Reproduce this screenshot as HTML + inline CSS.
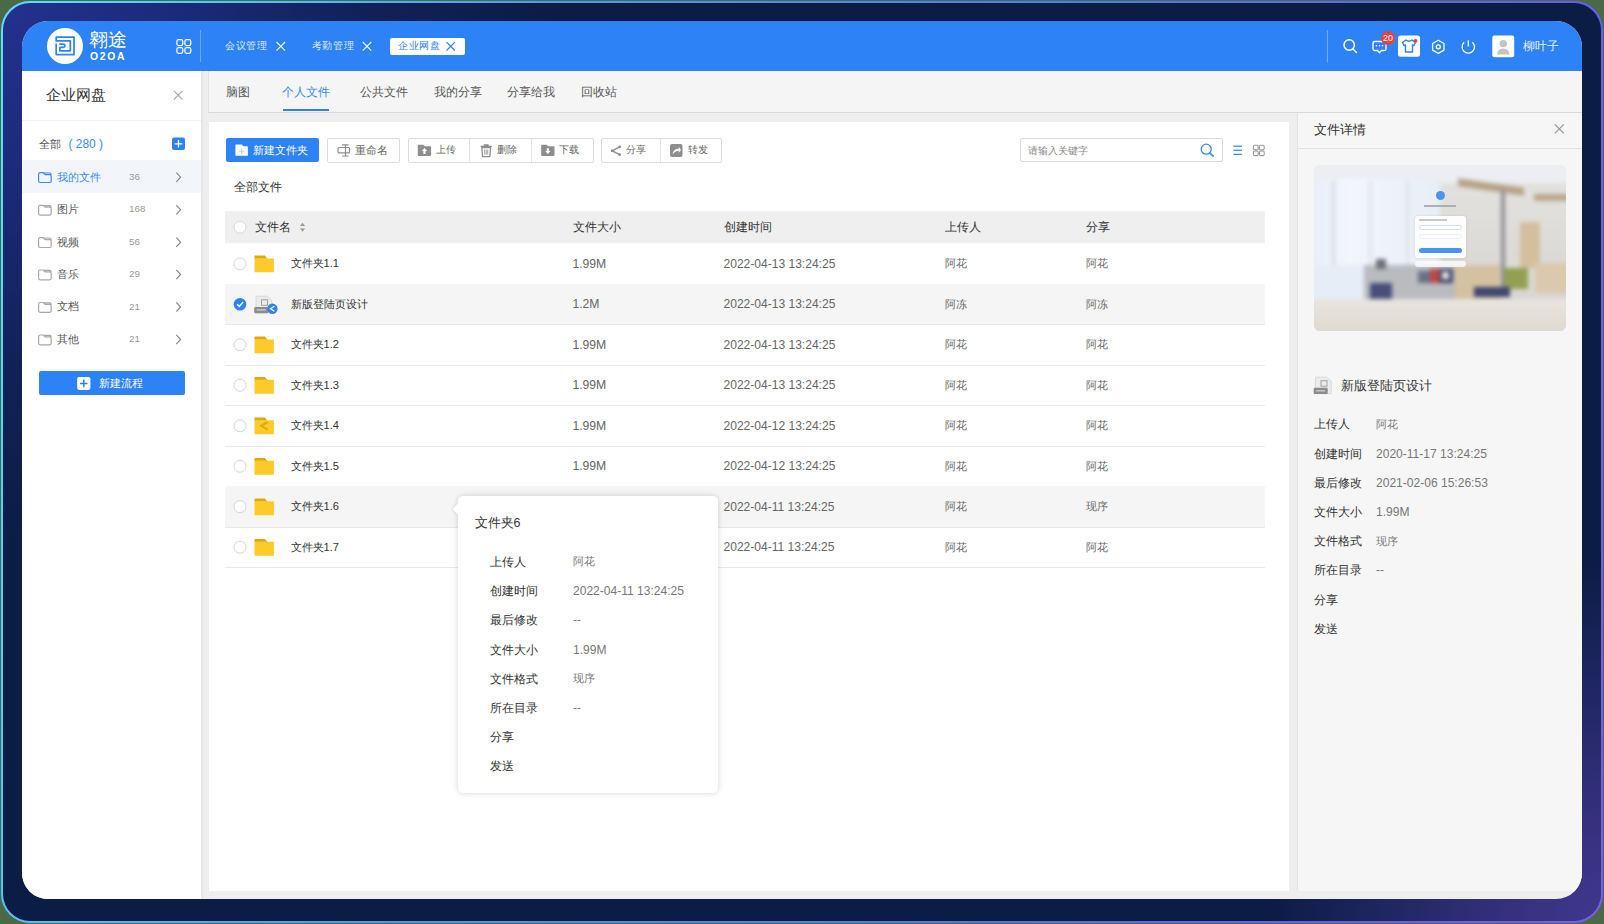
<!DOCTYPE html><html><head><meta charset="utf-8"><style>
*{box-sizing:border-box;margin:0;padding:0}
html,body{width:1604px;height:924px;overflow:hidden;background:#4a6a47;font-family:"Liberation Sans",sans-serif;color:#333}
.abs{position:absolute}
#frame{position:absolute;left:1px;top:1px;width:1602px;height:922px;border-radius:29px;
 background:linear-gradient(105deg,#5ee0ff 0%,#4f9af2 30%,#4f7ce6 60%,#6a5cf0 85%,#7a5cf4 100%)}
#frame2{position:absolute;left:2px;top:2px;right:2px;bottom:2px;border-radius:27px;overflow:hidden;
 background:radial-gradient(ellipse 560px 560px at 0 0,#23318f 0%,rgba(35,49,143,.7) 30%,rgba(35,49,143,.25) 65%,rgba(11,28,69,0) 100%),
 radial-gradient(ellipse 330px 360px at 100% 100%,#41378f 0%,rgba(65,55,143,.7) 35%,rgba(11,28,69,0) 100%),#0b1c45}
#glow1{position:absolute;left:-500px;top:-500px;width:1300px;height:1100px;border-radius:50%;
 background:radial-gradient(closest-side,#22308f 40%,rgba(34,48,143,0) 100%)}
#glow2{position:absolute;left:1200px;top:500px;width:800px;height:800px;border-radius:50%;
 background:radial-gradient(closest-side,#3f3592 30%,rgba(63,53,146,0) 100%)}
#app{position:absolute;left:22px;top:21px;width:1560px;height:878px;border-radius:26px;overflow:hidden;background:#eeeeee}
#hdr{position:absolute;left:0;top:0;width:1560px;height:50px;background:#2d82f6}
.t{position:absolute;white-space:nowrap}
svg.ov{position:absolute;left:0;top:0;width:1604px;height:924px;overflow:visible}
</style></head><body>
<div id="frame"><div id="frame2"></div></div>
<div id="app"><div id="hdr"></div>
<div class="abs" style="left:0;top:50px;width:179px;height:828px;background:#fff"></div>
<div class="abs" style="left:179px;top:50px;width:3px;height:828px;background:linear-gradient(90deg,#e2e2e2,#eeeeee)"></div>
<div class="abs" style="left:186px;top:50px;width:1374px;height:42px;background:#f5f5f5;border-left:1px solid #e2e2e2;border-bottom:1px solid #d9d9d9"></div>
<div class="abs" style="left:187px;top:101px;width:1080px;height:769px;background:#fff"></div>
<div class="abs" style="left:1275px;top:92px;width:285px;height:778px;background:#f6f6f6;border-left:1px solid #e2e2e2"></div>
</div>
<div class="abs" style="left:46.5px;top:27.7px;width:36.6px;height:36.6px;border-radius:50%;background:#fff"></div>
<div class="t" style="left:89.3px;top:31.30px;font-size:18.6px;height:18.6px;line-height:18.6px;color:#ffffff;font-weight:normal;">翱途</div>
<div class="t" style="left:90px;top:51.70px;font-size:10.4px;height:10.4px;line-height:10.4px;color:#ffffff;font-weight:bold;letter-spacing:1.7px">O2OA</div>
<div class="t" style="left:225.2px;top:40.77px;font-size:10.45px;height:10.45px;line-height:10.45px;color:rgba(255,255,255,.85);font-weight:normal;letter-spacing:0.6px">会议管理</div>
<div class="t" style="left:311.8px;top:40.77px;font-size:10.45px;height:10.45px;line-height:10.45px;color:rgba(255,255,255,.85);font-weight:normal;letter-spacing:0.6px">考勤管理</div>
<div class="abs" style="left:389.8px;top:37.6px;width:75.4px;height:17.3px;border-radius:2px;background:#fff"></div>
<div class="t" style="left:398.2px;top:40.77px;font-size:10.45px;height:10.45px;line-height:10.45px;color:#2d82f6;font-weight:normal;letter-spacing:0.6px">企业网盘</div>
<div class="t" style="left:1523.3px;top:41.30px;font-size:11.8px;height:11.8px;line-height:11.8px;color:rgba(255,255,255,.9);font-weight:normal;">柳叶子</div>
<div class="t" style="left:46.3px;top:88.10px;font-size:14.6px;height:14.6px;line-height:14.6px;color:#333;font-weight:500;">企业网盘</div>
<div class="abs" style="left:22px;top:119.5px;width:179px;height:1px;background:#eef0f4"></div>
<div class="t" style="left:38.5px;top:139.10px;font-size:11.4px;height:11.4px;line-height:11.4px;color:#555;font-weight:normal;">全部</div>
<div class="t" style="left:68.5px;top:138.85px;font-size:11.9px;height:11.9px;line-height:11.9px;color:#3a8af2;font-weight:normal;">( 280 )</div>
<div class="abs" style="left:22px;top:160.2px;width:179px;height:32.4px;background:#f2f6fb"></div>
<div class="t" style="left:56.5px;top:171.50px;font-size:11.4px;height:11.4px;line-height:11.4px;color:#3a8af2;font-weight:normal;">我的文件</div>
<div class="t" style="left:129.1px;top:171.80px;font-size:9.8px;height:9.8px;line-height:9.8px;color:#999;font-weight:normal;">36</div>
<div class="t" style="left:56.5px;top:204.10px;font-size:11.4px;height:11.4px;line-height:11.4px;color:#555;font-weight:normal;">图片</div>
<div class="t" style="left:129.1px;top:204.40px;font-size:9.8px;height:9.8px;line-height:9.8px;color:#999;font-weight:normal;">168</div>
<div class="t" style="left:56.5px;top:236.50px;font-size:11.4px;height:11.4px;line-height:11.4px;color:#555;font-weight:normal;">视频</div>
<div class="t" style="left:129.1px;top:236.80px;font-size:9.8px;height:9.8px;line-height:9.8px;color:#999;font-weight:normal;">56</div>
<div class="t" style="left:56.5px;top:268.80px;font-size:11.4px;height:11.4px;line-height:11.4px;color:#555;font-weight:normal;">音乐</div>
<div class="t" style="left:129.1px;top:269.10px;font-size:9.8px;height:9.8px;line-height:9.8px;color:#999;font-weight:normal;">29</div>
<div class="t" style="left:56.5px;top:301.30px;font-size:11.4px;height:11.4px;line-height:11.4px;color:#555;font-weight:normal;">文档</div>
<div class="t" style="left:129.1px;top:301.60px;font-size:9.8px;height:9.8px;line-height:9.8px;color:#999;font-weight:normal;">21</div>
<div class="t" style="left:56.5px;top:333.80px;font-size:11.4px;height:11.4px;line-height:11.4px;color:#555;font-weight:normal;">其他</div>
<div class="t" style="left:129.1px;top:334.10px;font-size:9.8px;height:9.8px;line-height:9.8px;color:#999;font-weight:normal;">21</div>
<div class="abs" style="left:38.5px;top:371.1px;width:146.5px;height:24.4px;border-radius:2px;background:#2d82f6"></div>
<div class="t" style="left:98.9px;top:377.80px;font-size:11.4px;height:11.4px;line-height:11.4px;color:#fff;font-weight:normal;">新建流程</div>
<div class="t" style="left:225.5px;top:85.55px;font-size:12.1px;height:12.1px;line-height:12.1px;color:#555;font-weight:normal;">脑图</div>
<div class="t" style="left:282.4px;top:85.55px;font-size:12.1px;height:12.1px;line-height:12.1px;color:#3a8af2;font-weight:normal;">个人文件</div>
<div class="t" style="left:359.7px;top:85.55px;font-size:12.1px;height:12.1px;line-height:12.1px;color:#555;font-weight:normal;">公共文件</div>
<div class="t" style="left:433.7px;top:85.55px;font-size:12.1px;height:12.1px;line-height:12.1px;color:#555;font-weight:normal;">我的分享</div>
<div class="t" style="left:507.3px;top:85.55px;font-size:12.1px;height:12.1px;line-height:12.1px;color:#555;font-weight:normal;">分享给我</div>
<div class="t" style="left:581.3px;top:85.55px;font-size:12.1px;height:12.1px;line-height:12.1px;color:#555;font-weight:normal;">回收站</div>
<div class="abs" style="left:282.8px;top:108.9px;width:45.8px;height:2.6px;background:#2d82f6"></div>
<div class="abs" style="left:225.9px;top:138.1px;width:93.4px;height:24.4px;border-radius:2px;background:#2d82f6"></div>
<div class="t" style="left:252.8px;top:145.30px;font-size:10.6px;height:10.6px;line-height:10.6px;color:#fff;font-weight:normal;">新建文件夹</div>
<div class="abs" style="left:327.4px;top:138.1px;width:72.70000000000005px;height:24.5px;border-radius:2px;border:1px solid #dcdcdc;background:#fff"></div>
<div class="t" style="left:355.2px;top:145.35px;font-size:10.5px;height:10.5px;line-height:10.5px;color:#666;font-weight:normal;">重命名</div>
<div class="abs" style="left:408px;top:138.1px;width:185.79999999999995px;height:24.5px;border-radius:2px;border:1px solid #dcdcdc;background:#fff"></div>
<div class="abs" style="left:469px;top:138.6px;width:1px;height:23.5px;background:#e2e2e2"></div>
<div class="abs" style="left:531px;top:138.6px;width:1px;height:23.5px;background:#e2e2e2"></div>
<div class="t" style="left:436px;top:145.40px;font-size:10.4px;height:10.4px;line-height:10.4px;color:#666;font-weight:normal;">上传</div>
<div class="t" style="left:497.4px;top:145.40px;font-size:10.4px;height:10.4px;line-height:10.4px;color:#666;font-weight:normal;">删除</div>
<div class="t" style="left:559.4px;top:145.40px;font-size:10.4px;height:10.4px;line-height:10.4px;color:#666;font-weight:normal;">下载</div>
<div class="abs" style="left:601.3px;top:138.1px;width:120.40000000000009px;height:24.5px;border-radius:2px;border:1px solid #dcdcdc;background:#fff"></div>
<div class="abs" style="left:659.5px;top:138.7px;width:1px;height:23.5px;background:#e2e2e2"></div>
<div class="t" style="left:626.1px;top:145.40px;font-size:10.4px;height:10.4px;line-height:10.4px;color:#666;font-weight:normal;">分享</div>
<div class="t" style="left:687.6px;top:145.40px;font-size:10.4px;height:10.4px;line-height:10.4px;color:#666;font-weight:normal;">转发</div>
<div class="abs" style="left:1020px;top:138.2px;width:202.6px;height:24.3px;border-radius:2px;border:1px solid #d9d9d9;background:#fff"></div>
<div class="t" style="left:1028.2px;top:145.50px;font-size:9.8px;height:9.8px;line-height:9.8px;color:#888;font-weight:normal;">请输入关键字</div>
<div class="t" style="left:233.5px;top:181.35px;font-size:12.1px;height:12.1px;line-height:12.1px;color:#333;font-weight:normal;">全部文件</div>
<div class="abs" style="left:225px;top:211px;width:1040px;height:32.4px;background:#efefef"></div>
<div class="t" style="left:254.8px;top:221.40px;font-size:12px;height:12px;line-height:12px;color:#333;font-weight:500;">文件名</div>
<div class="t" style="left:572.5px;top:221.40px;font-size:12px;height:12px;line-height:12px;color:#333;font-weight:500;">文件大小</div>
<div class="t" style="left:723.5px;top:221.40px;font-size:12px;height:12px;line-height:12px;color:#333;font-weight:500;">创建时间</div>
<div class="t" style="left:944.8px;top:221.40px;font-size:12px;height:12px;line-height:12px;color:#333;font-weight:500;">上传人</div>
<div class="t" style="left:1086px;top:221.40px;font-size:12px;height:12px;line-height:12px;color:#333;font-weight:500;">分享</div>
<div class="abs" style="left:225px;top:283.80px;width:1040px;height:1px;background:#e8e8e8"></div>
<div class="t" style="left:290.6px;top:258.25px;font-size:11.1px;height:11.1px;line-height:11.1px;color:#333;font-weight:normal;">文件夹1.1</div>
<div class="t" style="left:572.4px;top:257.70px;font-size:12.2px;height:12.2px;line-height:12.2px;color:#666;font-weight:normal;">1.99M</div>
<div class="t" style="left:723.5px;top:257.78px;font-size:12.05px;height:12.05px;line-height:12.05px;color:#666;font-weight:normal;">2022-04-13 13:24:25</div>
<div class="t" style="left:944.8px;top:258.20px;font-size:11.2px;height:11.2px;line-height:11.2px;color:#666;font-weight:normal;">阿花</div>
<div class="t" style="left:1086px;top:258.20px;font-size:11.2px;height:11.2px;line-height:11.2px;color:#666;font-weight:normal;">阿花</div>
<div class="abs" style="left:225px;top:283.79px;width:1040px;height:40.5px;background:#f5f5f5"></div>
<div class="abs" style="left:225px;top:324.29px;width:1040px;height:1px;background:#e8e8e8"></div>
<div class="t" style="left:290.6px;top:298.74px;font-size:11.1px;height:11.1px;line-height:11.1px;color:#333;font-weight:normal;">新版登陆页设计</div>
<div class="t" style="left:572.4px;top:298.19px;font-size:12.2px;height:12.2px;line-height:12.2px;color:#666;font-weight:normal;">1.2M</div>
<div class="t" style="left:723.5px;top:298.27px;font-size:12.05px;height:12.05px;line-height:12.05px;color:#666;font-weight:normal;">2022-04-13 13:24:25</div>
<div class="t" style="left:944.8px;top:298.69px;font-size:11.2px;height:11.2px;line-height:11.2px;color:#666;font-weight:normal;">阿冻</div>
<div class="t" style="left:1086px;top:298.69px;font-size:11.2px;height:11.2px;line-height:11.2px;color:#666;font-weight:normal;">阿冻</div>
<div class="abs" style="left:225px;top:364.78px;width:1040px;height:1px;background:#e8e8e8"></div>
<div class="t" style="left:290.6px;top:339.23px;font-size:11.1px;height:11.1px;line-height:11.1px;color:#333;font-weight:normal;">文件夹1.2</div>
<div class="t" style="left:572.4px;top:338.68px;font-size:12.2px;height:12.2px;line-height:12.2px;color:#666;font-weight:normal;">1.99M</div>
<div class="t" style="left:723.5px;top:338.76px;font-size:12.05px;height:12.05px;line-height:12.05px;color:#666;font-weight:normal;">2022-04-13 13:24:25</div>
<div class="t" style="left:944.8px;top:339.18px;font-size:11.2px;height:11.2px;line-height:11.2px;color:#666;font-weight:normal;">阿花</div>
<div class="t" style="left:1086px;top:339.18px;font-size:11.2px;height:11.2px;line-height:11.2px;color:#666;font-weight:normal;">阿花</div>
<div class="abs" style="left:225px;top:405.27px;width:1040px;height:1px;background:#e8e8e8"></div>
<div class="t" style="left:290.6px;top:379.72px;font-size:11.1px;height:11.1px;line-height:11.1px;color:#333;font-weight:normal;">文件夹1.3</div>
<div class="t" style="left:572.4px;top:379.17px;font-size:12.2px;height:12.2px;line-height:12.2px;color:#666;font-weight:normal;">1.99M</div>
<div class="t" style="left:723.5px;top:379.25px;font-size:12.05px;height:12.05px;line-height:12.05px;color:#666;font-weight:normal;">2022-04-13 13:24:25</div>
<div class="t" style="left:944.8px;top:379.67px;font-size:11.2px;height:11.2px;line-height:11.2px;color:#666;font-weight:normal;">阿花</div>
<div class="t" style="left:1086px;top:379.67px;font-size:11.2px;height:11.2px;line-height:11.2px;color:#666;font-weight:normal;">阿花</div>
<div class="abs" style="left:225px;top:445.76px;width:1040px;height:1px;background:#e8e8e8"></div>
<div class="t" style="left:290.6px;top:420.21px;font-size:11.1px;height:11.1px;line-height:11.1px;color:#333;font-weight:normal;">文件夹1.4</div>
<div class="t" style="left:572.4px;top:419.66px;font-size:12.2px;height:12.2px;line-height:12.2px;color:#666;font-weight:normal;">1.99M</div>
<div class="t" style="left:723.5px;top:419.74px;font-size:12.05px;height:12.05px;line-height:12.05px;color:#666;font-weight:normal;">2022-04-12 13:24:25</div>
<div class="t" style="left:944.8px;top:420.16px;font-size:11.2px;height:11.2px;line-height:11.2px;color:#666;font-weight:normal;">阿花</div>
<div class="t" style="left:1086px;top:420.16px;font-size:11.2px;height:11.2px;line-height:11.2px;color:#666;font-weight:normal;">阿花</div>
<div class="abs" style="left:225px;top:486.25px;width:1040px;height:1px;background:#e8e8e8"></div>
<div class="t" style="left:290.6px;top:460.70px;font-size:11.1px;height:11.1px;line-height:11.1px;color:#333;font-weight:normal;">文件夹1.5</div>
<div class="t" style="left:572.4px;top:460.15px;font-size:12.2px;height:12.2px;line-height:12.2px;color:#666;font-weight:normal;">1.99M</div>
<div class="t" style="left:723.5px;top:460.23px;font-size:12.05px;height:12.05px;line-height:12.05px;color:#666;font-weight:normal;">2022-04-12 13:24:25</div>
<div class="t" style="left:944.8px;top:460.65px;font-size:11.2px;height:11.2px;line-height:11.2px;color:#666;font-weight:normal;">阿花</div>
<div class="t" style="left:1086px;top:460.65px;font-size:11.2px;height:11.2px;line-height:11.2px;color:#666;font-weight:normal;">阿花</div>
<div class="abs" style="left:225px;top:486.24px;width:1040px;height:40.5px;background:#f5f5f5"></div>
<div class="abs" style="left:225px;top:526.74px;width:1040px;height:1px;background:#e8e8e8"></div>
<div class="t" style="left:290.6px;top:501.19px;font-size:11.1px;height:11.1px;line-height:11.1px;color:#333;font-weight:normal;">文件夹1.6</div>
<div class="t" style="left:723.5px;top:500.72px;font-size:12.05px;height:12.05px;line-height:12.05px;color:#666;font-weight:normal;">2022-04-11 13:24:25</div>
<div class="t" style="left:944.8px;top:501.14px;font-size:11.2px;height:11.2px;line-height:11.2px;color:#666;font-weight:normal;">阿花</div>
<div class="t" style="left:1086px;top:501.14px;font-size:11.2px;height:11.2px;line-height:11.2px;color:#666;font-weight:normal;">现序</div>
<div class="abs" style="left:225px;top:567.23px;width:1040px;height:1px;background:#e8e8e8"></div>
<div class="t" style="left:290.6px;top:541.68px;font-size:11.1px;height:11.1px;line-height:11.1px;color:#333;font-weight:normal;">文件夹1.7</div>
<div class="t" style="left:723.5px;top:541.21px;font-size:12.05px;height:12.05px;line-height:12.05px;color:#666;font-weight:normal;">2022-04-11 13:24:25</div>
<div class="t" style="left:944.8px;top:541.63px;font-size:11.2px;height:11.2px;line-height:11.2px;color:#666;font-weight:normal;">阿花</div>
<div class="t" style="left:1086px;top:541.63px;font-size:11.2px;height:11.2px;line-height:11.2px;color:#666;font-weight:normal;">阿花</div>
<div class="t" style="left:1314.3px;top:123.20px;font-size:13px;height:13px;line-height:13px;color:#333;font-weight:normal;">文件详情</div>
<div class="abs" style="left:1298px;top:147.6px;width:284px;height:1px;background:#e2e2e2"></div>
<div class="abs" style="left:1314.2px;top:165.3px;width:251.8px;height:166.1px;border-radius:6px;overflow:hidden;background:#e2e2e0">
<div class="abs" style="left:0;top:0;width:252px;height:166px;filter:blur(2px)">
 <div class="abs" style="left:-6px;top:-6px;width:264px;height:30px;background:#eceef1"></div>
 <div class="abs" style="left:-6px;top:14px;width:134px;height:124px;background:linear-gradient(90deg,#e6eef9 0%,#f3f6fb 30%,#eef3f9 60%,#e9eef5 100%)"></div>
 <div class="abs" style="left:18px;top:16px;width:3px;height:110px;background:#d4dbe4"></div>
 <div class="abs" style="left:55px;top:16px;width:3px;height:110px;background:#dde3ea"></div>
 <div class="abs" style="left:92px;top:16px;width:3px;height:110px;background:#dde3ea"></div>
 <div class="abs" style="left:126px;top:18px;width:132px;height:120px;background:linear-gradient(180deg,#e2e1df,#d8d6d2)"></div>
 <div class="abs" style="left:144px;top:18px;width:66px;height:8px;background:#b6a387;transform:skewY(8deg)"></div>
 <div class="abs" style="left:220px;top:29px;width:36px;height:7px;background:#b9a78c"></div>
 <div class="abs" style="left:187px;top:26px;width:4px;height:100px;background:#8d8e94"></div>
 <div class="abs" style="left:206px;top:57px;width:20px;height:46px;background:#d3bf9d"></div>
 <div class="abs" style="left:221px;top:98px;width:36px;height:30px;background:#dac9ad"></div>
 <div class="abs" style="left:140px;top:100px;width:46px;height:36px;background:#d4c1a1"></div>
 <div class="abs" style="left:49px;top:100px;width:92px;height:36px;background:#b9bbbf"></div>
 <div class="abs" style="left:-6px;top:100px;width:56px;height:36px;background:#e6edf6"></div>
 <div class="abs" style="left:56px;top:118px;width:22px;height:18px;background:#4a4f78"></div>
 <div class="abs" style="left:104px;top:106px;width:12px;height:12px;background:#6a7088"></div>
 <div class="abs" style="left:116px;top:104px;width:9px;height:14px;background:#c04848"></div>
 <div class="abs" style="left:125px;top:104px;width:14px;height:14px;background:#3f4766"></div>
 <div class="abs" style="left:128px;top:107px;width:7px;height:7px;background:#e8e8e8"></div>
 <div class="abs" style="left:62px;top:94px;width:10px;height:10px;background:#6e7078"></div>
 <div class="abs" style="left:190px;top:103px;width:24px;height:21px;background:#93a052"></div>
 <div class="abs" style="left:160px;top:122px;width:36px;height:10px;background:#3f4670"></div>
 <div class="abs" style="left:-6px;top:134px;width:264px;height:40px;background:linear-gradient(180deg,#e8e5df,#dcd7ce)"></div>
</div>
<div class="abs" style="left:101px;top:50.5px;width:51px;height:42.5px;border-radius:3px;background:#fdfdfd;box-shadow:0 0 3px rgba(0,0,0,.12)"></div>
<div class="abs" style="left:105px;top:53.5px;width:28px;height:2px;background:#c8c8c8"></div>
<div class="abs" style="left:105px;top:60px;width:43px;height:5px;border-radius:3px;border:1px solid #cfdff5"></div>
<div class="abs" style="left:105px;top:69px;width:43px;height:5px;border-radius:3px;border:1px solid #eee"></div>
<div class="abs" style="left:105px;top:83px;width:43px;height:5px;border-radius:3px;background:#4a94f0"></div>
<div class="abs" style="left:101px;top:96px;width:51px;height:6px;border-radius:3px;background:rgba(250,250,250,.85)"></div>
<div class="abs" style="left:121.5px;top:25.5px;width:9px;height:9px;border-radius:50%;background:#4a94f0"></div>
<div class="abs" style="left:110px;top:39.5px;width:32px;height:2.6px;background:#aab0b8;filter:blur(.6px)"></div>
</div>
<div class="t" style="left:1341.3px;top:378.70px;font-size:13px;height:13px;line-height:13px;color:#333;font-weight:normal;">新版登陆页设计</div>
<div class="t" style="left:1313.7px;top:418.45px;font-size:12.1px;height:12.1px;line-height:12.1px;color:#333;font-weight:normal;">上传人</div>
<div class="t" style="left:1376px;top:418.80px;font-size:11.4px;height:11.4px;line-height:11.4px;color:#777;font-weight:normal;">阿花</div>
<div class="t" style="left:1313.7px;top:447.63px;font-size:12.1px;height:12.1px;line-height:12.1px;color:#333;font-weight:normal;">创建时间</div>
<div class="t" style="left:1376px;top:447.66px;font-size:12.05px;height:12.05px;line-height:12.05px;color:#777;font-weight:normal;">2020-11-17 13:24:25</div>
<div class="t" style="left:1313.7px;top:476.81px;font-size:12.1px;height:12.1px;line-height:12.1px;color:#333;font-weight:normal;">最后修改</div>
<div class="t" style="left:1376px;top:476.84px;font-size:12.05px;height:12.05px;line-height:12.05px;color:#777;font-weight:normal;">2021-02-06 15:26:53</div>
<div class="t" style="left:1313.7px;top:505.99px;font-size:12.1px;height:12.1px;line-height:12.1px;color:#333;font-weight:normal;">文件大小</div>
<div class="t" style="left:1376px;top:506.01px;font-size:12.05px;height:12.05px;line-height:12.05px;color:#777;font-weight:normal;">1.99M</div>
<div class="t" style="left:1313.7px;top:535.17px;font-size:12.1px;height:12.1px;line-height:12.1px;color:#333;font-weight:normal;">文件格式</div>
<div class="t" style="left:1376px;top:535.52px;font-size:11.4px;height:11.4px;line-height:11.4px;color:#777;font-weight:normal;">现序</div>
<div class="t" style="left:1313.7px;top:564.35px;font-size:12.1px;height:12.1px;line-height:12.1px;color:#333;font-weight:normal;">所在目录</div>
<div class="t" style="left:1376px;top:564.38px;font-size:12.05px;height:12.05px;line-height:12.05px;color:#777;font-weight:normal;">--</div>
<div class="t" style="left:1313.7px;top:593.53px;font-size:12.1px;height:12.1px;line-height:12.1px;color:#333;font-weight:normal;">分享</div>
<div class="t" style="left:1313.7px;top:622.71px;font-size:12.1px;height:12.1px;line-height:12.1px;color:#333;font-weight:normal;">发送</div>
<div class="abs" style="left:457.9px;top:496px;width:260px;height:296.5px;border-radius:5px;background:#fff;box-shadow:0 0 6px rgba(0,0,0,.17)"></div>
<div class="abs" style="left:453.5px;top:504.5px;width:8px;height:8px;background:#fff;transform:rotate(45deg);box-shadow:-1px 1px 2px rgba(0,0,0,.08)"></div>
<div class="abs" style="left:458px;top:500px;width:8px;height:18px;background:#fff"></div>
<div class="t" style="left:474.6px;top:516.65px;font-size:12.5px;height:12.5px;line-height:12.5px;color:#333;font-weight:normal;">文件夹6</div>
<div class="t" style="left:490px;top:556.05px;font-size:12.1px;height:12.1px;line-height:12.1px;color:#333;font-weight:normal;">上传人</div>
<div class="t" style="left:573px;top:556.40px;font-size:11.4px;height:11.4px;line-height:11.4px;color:#777;font-weight:normal;">阿花</div>
<div class="t" style="left:490px;top:585.22px;font-size:12.1px;height:12.1px;line-height:12.1px;color:#333;font-weight:normal;">创建时间</div>
<div class="t" style="left:573px;top:585.25px;font-size:12.05px;height:12.05px;line-height:12.05px;color:#777;font-weight:normal;">2022-04-11 13:24:25</div>
<div class="t" style="left:490px;top:614.39px;font-size:12.1px;height:12.1px;line-height:12.1px;color:#333;font-weight:normal;">最后修改</div>
<div class="t" style="left:573px;top:614.42px;font-size:12.05px;height:12.05px;line-height:12.05px;color:#777;font-weight:normal;">--</div>
<div class="t" style="left:490px;top:643.56px;font-size:12.1px;height:12.1px;line-height:12.1px;color:#333;font-weight:normal;">文件大小</div>
<div class="t" style="left:573px;top:643.59px;font-size:12.05px;height:12.05px;line-height:12.05px;color:#777;font-weight:normal;">1.99M</div>
<div class="t" style="left:490px;top:672.73px;font-size:12.1px;height:12.1px;line-height:12.1px;color:#333;font-weight:normal;">文件格式</div>
<div class="t" style="left:573px;top:673.08px;font-size:11.4px;height:11.4px;line-height:11.4px;color:#777;font-weight:normal;">现序</div>
<div class="t" style="left:490px;top:701.90px;font-size:12.1px;height:12.1px;line-height:12.1px;color:#333;font-weight:normal;">所在目录</div>
<div class="t" style="left:573px;top:701.93px;font-size:12.05px;height:12.05px;line-height:12.05px;color:#777;font-weight:normal;">--</div>
<div class="t" style="left:490px;top:731.07px;font-size:12.1px;height:12.1px;line-height:12.1px;color:#333;font-weight:normal;">分享</div>
<div class="t" style="left:490px;top:760.24px;font-size:12.1px;height:12.1px;line-height:12.1px;color:#333;font-weight:normal;">发送</div>
<svg class="ov" viewBox="0 0 1604 924"><path d="M56.2,43.4 V54.6 H74 V37 H56.2 V40.9 H70.3 V50.8 H59.9 V47.3 H63.3 A1.6,1.6 0 0 0 63.3,44.1 H59.2" fill="none" stroke="#2d82f6" stroke-width="1.75" stroke-linejoin="round"/><rect x="176.9" y="39.7" width="5.9" height="5.9" rx="1.8" fill="none" stroke="#fff" stroke-width="1.25"/><rect x="176.9" y="47.5" width="5.9" height="5.9" rx="1.8" fill="none" stroke="#fff" stroke-width="1.25"/><rect x="184.9" y="39.7" width="5.9" height="5.9" rx="1.8" fill="none" stroke="#fff" stroke-width="1.25"/><rect x="184.9" y="47.5" width="5.9" height="5.9" rx="1.8" fill="none" stroke="#fff" stroke-width="1.25"/><line x1="200.6" y1="30" x2="200.6" y2="62" stroke="rgba(255,255,255,.35)" stroke-width="1"/><path d="M276.5,42.0 L285.1,50.599999999999994 M285.1,42.0 L276.5,50.599999999999994" stroke="rgba(255,255,255,.9)" stroke-width="1.2" fill="none"/><path d="M362.7,42.0 L371.3,50.599999999999994 M371.3,42.0 L362.7,50.599999999999994" stroke="rgba(255,255,255,.9)" stroke-width="1.2" fill="none"/><path d="M446.5,42.099999999999994 L454.9,50.5 M454.9,42.099999999999994 L446.5,50.5" stroke="#2d82f6" stroke-width="1.2" fill="none"/><line x1="1327.4" y1="30" x2="1327.4" y2="62.5" stroke="rgba(255,255,255,.35)" stroke-width="1"/><circle cx="1349.2" cy="45" r="5.2" fill="none" stroke="#fff" stroke-width="1.5"/><line x1="1353" y1="49" x2="1356.5" y2="52.5" stroke="#fff" stroke-width="1.6" stroke-linecap="round"/><path d="M1374.5,41.5 H1384.5 Q1386,41.5 1386,43 V49 Q1386,50.5 1384.5,50.5 H1381.5 L1379.5,52.8 L1377.5,50.5 H1374.5 Q1373,50.5 1373,49 V43 Q1373,41.5 1374.5,41.5 Z" fill="none" stroke="#fff" stroke-width="1.3"/><circle cx="1376.5" cy="45.8" r="0.8" fill="#fff"/><circle cx="1379.5" cy="45.8" r="0.8" fill="#fff"/><circle cx="1382.5" cy="45.8" r="0.8" fill="#fff"/><circle cx="1388" cy="38" r="7" fill="#e8413f"/><text x="1388" y="41.2" font-size="9" fill="#fff" text-anchor="middle" font-family="Liberation Sans">20</text><rect x="1398" y="35.4" width="22" height="21.4" rx="2.5" fill="#fff"/><path d="M1402.5,42.5 L1406,40 Q1409,42.5 1412,40 L1415.5,42.5 L1414,45.5 L1412.5,45 V52 H1405.5 V45 L1404,45.5 Z" fill="none" stroke="#2d82f6" stroke-width="1.4" stroke-linejoin="round"/><circle cx="1415.5" cy="40.8" r="1.9" fill="#e8413f"/><path d="M1438.3,40.2 L1444,43.5 V50.1 L1438.3,53.4 L1432.6,50.1 V43.5 Z" fill="none" stroke="#fff" stroke-width="1.3" stroke-linejoin="round"/><circle cx="1438.3" cy="46.8" r="2" fill="none" stroke="#fff" stroke-width="1.3"/><path d="M1464.2,42.3 A6.2,6.2 0 1 0 1472.4,42.3" fill="none" stroke="#fff" stroke-width="1.3"/><line x1="1468.3" y1="40.2" x2="1468.3" y2="46.5" stroke="#fff" stroke-width="1.3"/><rect x="1492.3" y="35.4" width="21.9" height="21.8" rx="2" fill="#fff"/><circle cx="1503.3" cy="43.6" r="3.7" fill="#c4c4c4"/><path d="M1497.2,54.5 Q1497,48.6 1503.3,48.4 Q1509.6,48.6 1509.4,54.5 Z" fill="#c4c4c4"/><path d="M173.89999999999998,90.9 L182.5,99.5 M182.5,90.9 L173.89999999999998,99.5" stroke="#aaa" stroke-width="1.1" fill="none"/><rect x="172" y="137.4" width="13" height="12.7" rx="2" fill="#2d82f6"/><path d="M178.5,140 V147.6 M174.7,143.8 H182.3" stroke="#fff" stroke-width="1.3"/><path d="M40.1,172.70 H43.3 L45.1,174.60 H49.7 Q51.2,174.60 51.2,176.10 V181.00 Q51.2,182.50 49.7,182.50 H40.1 Q38.6,182.50 38.6,181.00 V174.20 Q38.6,172.70 40.1,172.70 Z M44.2,173.00 H49.8 Q51,173.00 51,174.20 V175.00" fill="none" stroke="#3a8af2" stroke-width="1.2" stroke-linejoin="round"/><path d="M176.3,172.6 L180.6,177.2 L176.3,181.79999999999998" fill="none" stroke="#8a8a8a" stroke-width="1.2"/><path d="M40.1,205.30 H43.3 L45.1,207.20 H49.7 Q51.2,207.20 51.2,208.70 V213.60 Q51.2,215.10 49.7,215.10 H40.1 Q38.6,215.10 38.6,213.60 V206.80 Q38.6,205.30 40.1,205.30 Z M44.2,205.60 H49.8 Q51,205.60 51,206.80 V207.60" fill="none" stroke="#a8a8a8" stroke-width="1.2" stroke-linejoin="round"/><path d="M176.3,205.20000000000002 L180.6,209.8 L176.3,214.4" fill="none" stroke="#8a8a8a" stroke-width="1.2"/><path d="M40.1,237.70 H43.3 L45.1,239.60 H49.7 Q51.2,239.60 51.2,241.10 V246.00 Q51.2,247.50 49.7,247.50 H40.1 Q38.6,247.50 38.6,246.00 V239.20 Q38.6,237.70 40.1,237.70 Z M44.2,238.00 H49.8 Q51,238.00 51,239.20 V240.00" fill="none" stroke="#a8a8a8" stroke-width="1.2" stroke-linejoin="round"/><path d="M176.3,237.6 L180.6,242.2 L176.3,246.79999999999998" fill="none" stroke="#8a8a8a" stroke-width="1.2"/><path d="M40.1,270.00 H43.3 L45.1,271.90 H49.7 Q51.2,271.90 51.2,273.40 V278.30 Q51.2,279.80 49.7,279.80 H40.1 Q38.6,279.80 38.6,278.30 V271.50 Q38.6,270.00 40.1,270.00 Z M44.2,270.30 H49.8 Q51,270.30 51,271.50 V272.30" fill="none" stroke="#a8a8a8" stroke-width="1.2" stroke-linejoin="round"/><path d="M176.3,269.9 L180.6,274.5 L176.3,279.1" fill="none" stroke="#8a8a8a" stroke-width="1.2"/><path d="M40.1,302.50 H43.3 L45.1,304.40 H49.7 Q51.2,304.40 51.2,305.90 V310.80 Q51.2,312.30 49.7,312.30 H40.1 Q38.6,312.30 38.6,310.80 V304.00 Q38.6,302.50 40.1,302.50 Z M44.2,302.80 H49.8 Q51,302.80 51,304.00 V304.80" fill="none" stroke="#a8a8a8" stroke-width="1.2" stroke-linejoin="round"/><path d="M176.3,302.4 L180.6,307 L176.3,311.6" fill="none" stroke="#8a8a8a" stroke-width="1.2"/><path d="M40.1,335.00 H43.3 L45.1,336.90 H49.7 Q51.2,336.90 51.2,338.40 V343.30 Q51.2,344.80 49.7,344.80 H40.1 Q38.6,344.80 38.6,343.30 V336.50 Q38.6,335.00 40.1,335.00 Z M44.2,335.30 H49.8 Q51,335.30 51,336.50 V337.30" fill="none" stroke="#a8a8a8" stroke-width="1.2" stroke-linejoin="round"/><path d="M176.3,334.9 L180.6,339.5 L176.3,344.1" fill="none" stroke="#8a8a8a" stroke-width="1.2"/><rect x="77.2" y="377" width="13.2" height="12.9" rx="1.8" fill="#fff"/><path d="M83.8,379.6 V387.3 M80,383.45 H87.6" stroke="#2d82f6" stroke-width="1.5"/><path d="M235.4,145 Q235.4,144.5 236,144.5 H241.8 L243.3,146.3 H247.3 Q247.9,146.3 247.9,146.9 V155.2 Q247.9,155.8 247.3,155.8 H236 Q235.4,155.8 235.4,155.2 Z" fill="#fff"/><path d="M241.6,148.6 V154 M238.9,151.3 H244.3" stroke="#a9cbf8" stroke-width="0.9"/><rect x="338.1" y="147.5" width="11.4" height="5.4" rx="1" fill="none" stroke="#8e8e8e" stroke-width="1.2"/><path d="M345.5,144.6 V156.2 M342,144.8 H348.6 M342,156 H348.6" stroke="#8e8e8e" stroke-width="1.2" fill="none"/><path d="M417.8,145.5 Q417.8,144.7 418.6,144.7 H423.40000000000003 L424.7,146.29999999999998 H430.3 Q431.1,146.29999999999998 431.1,147.1 V155.09999999999997 Q431.1,155.89999999999998 430.3,155.89999999999998 H418.6 Q417.8,155.89999999999998 417.8,155.09999999999997 Z" fill="#8e8e8e"/><path d="M424.45,148.1 L427.15,151.1 H425.55 V153.9 H423.34999999999997 V151.1 H421.75 Z" fill="#fff"/><path d="M480.6,146.3 H491.8 M484.3,146.3 V145 H488.1 V146.3 M481.8,147.6 L482.6,156.6 H489.8 L490.6,147.6 Z" fill="none" stroke="#8e8e8e" stroke-width="1.3" stroke-linejoin="round"/><path d="M484.7,149.5 V154.6 M486.2,149.5 V154.6 M487.7,149.5 V154.6" stroke="#8e8e8e" stroke-width="0.8"/><path d="M541.2,145.5 Q541.2,144.7 542.0,144.7 H546.8000000000001 L548.1,146.29999999999998 H553.7 Q554.5,146.29999999999998 554.5,147.1 V155.09999999999997 Q554.5,155.89999999999998 553.7,155.89999999999998 H542.0 Q541.2,155.89999999999998 541.2,155.09999999999997 Z" fill="#8e8e8e"/><path d="M547.85,154.1 L550.5500000000001,151.1 H548.95 V148.29999999999998 H546.75 V151.1 H545.15 Z" fill="#fff"/><path d="M619.6,146.9 L612.2,150.8 L619.6,154.7" fill="none" stroke="#8e8e8e" stroke-width="1.5" stroke-linejoin="round"/><circle cx="619.6" cy="146.9" r="1.4" fill="#8e8e8e"/><circle cx="612.2" cy="150.8" r="1.4" fill="#8e8e8e"/><circle cx="619.6" cy="154.7" r="1.4" fill="#8e8e8e"/><rect x="670" y="143.9" width="12.5" height="13" rx="2" fill="#8e8e8e"/><path d="M672.6,154.4 Q673,148.8 678.8,148.8 V146.8 L681,149.9 L678.8,152.8 V150.8 Q675.2,150.8 672.6,154.4 Z" fill="#fff"/><circle cx="1206.2" cy="149.2" r="5" fill="none" stroke="#3a8af2" stroke-width="1.3"/><line x1="1209.8" y1="152.8" x2="1213.2" y2="156.2" stroke="#3a8af2" stroke-width="1.7" stroke-linecap="round"/><line x1="1233.4" y1="146.2" x2="1241.9" y2="146.2" stroke="#3a8af2" stroke-width="1.3"/><line x1="1233.4" y1="150.3" x2="1241.9" y2="150.3" stroke="#3a8af2" stroke-width="1.3"/><line x1="1233.4" y1="154.4" x2="1241.9" y2="154.4" stroke="#3a8af2" stroke-width="1.3"/><rect x="1253.4" y="145.3" width="4.8" height="4.6" rx="1.4" fill="none" stroke="#999" stroke-width="1.1"/><rect x="1253.4" y="151.0" width="4.8" height="4.6" rx="1.4" fill="none" stroke="#999" stroke-width="1.1"/><rect x="1259.4" y="145.3" width="4.8" height="4.6" rx="1.4" fill="none" stroke="#999" stroke-width="1.1"/><rect x="1259.4" y="151.0" width="4.8" height="4.6" rx="1.4" fill="none" stroke="#999" stroke-width="1.1"/><circle cx="240" cy="227.2" r="6" fill="#fff" stroke="#d6d6d6" stroke-width="1"/><path d="M299.9,226 L302.5,222.8 L305.1,226 Z M299.9,228.6 L302.5,231.8 L305.1,228.6 Z" fill="#999"/><circle cx="240" cy="263.80" r="6" fill="#fff" stroke="#d6d6d6" stroke-width="1"/><path d="M254.5,256.00 Q254.5,255.50 255,255.50 H264.8 L267.6,258.70 H254.5 Z" fill="#d9a90f"/><path d="M254.5,258.40 H273.9 V271.70 Q273.9,272.20 273.4,272.20 H255 Q254.5,272.20 254.5,271.70 Z" fill="#fdca2a"/><path d="M256,258.40 H265.6 L266.6,259.40 H256 Z" fill="#fdca2a"/><circle cx="240" cy="304.29" r="6.3" fill="#2d82f6"/><path d="M237.1,304.29 L239.3,306.49 L243.1,302.09" fill="none" stroke="#fff" stroke-width="1.5"/><path d="M256.0,296.29 H267.2 L271.7,300.29 V312.79 H256.0 Z" fill="#ececec" stroke="#d2d2d2" stroke-width="0.8"/><rect x="261.5" y="299.79" width="6" height="5.5" fill="none" stroke="#a0a0a0" stroke-width="1"/><rect x="254.2" y="306.89000000000004" width="14" height="6.3" rx="1.2" fill="#8c8c8c"/><rect x="256.7" y="309.09000000000003" width="9" height="1.6" fill="#c4c4c4"/><circle cx="272.4" cy="308.79" r="5.2" fill="#2d82f6"/><path d="M274.4,306.29 L270.4,308.79 L274.4,311.29" fill="none" stroke="#fff" stroke-width="1.2"/><circle cx="240" cy="344.78" r="6" fill="#fff" stroke="#d6d6d6" stroke-width="1"/><path d="M254.5,336.98 Q254.5,336.48 255,336.48 H264.8 L267.6,339.68 H254.5 Z" fill="#d9a90f"/><path d="M254.5,339.38 H273.9 V352.68 Q273.9,353.18 273.4,353.18 H255 Q254.5,353.18 254.5,352.68 Z" fill="#fdca2a"/><path d="M256,339.38 H265.6 L266.6,340.38 H256 Z" fill="#fdca2a"/><circle cx="240" cy="385.27" r="6" fill="#fff" stroke="#d6d6d6" stroke-width="1"/><path d="M254.5,377.47 Q254.5,376.97 255,376.97 H264.8 L267.6,380.17 H254.5 Z" fill="#d9a90f"/><path d="M254.5,379.87 H273.9 V393.17 Q273.9,393.67 273.4,393.67 H255 Q254.5,393.67 254.5,393.17 Z" fill="#fdca2a"/><path d="M256,379.87 H265.6 L266.6,380.87 H256 Z" fill="#fdca2a"/><circle cx="240" cy="425.76" r="6" fill="#fff" stroke="#d6d6d6" stroke-width="1"/><path d="M254.5,417.96 Q254.5,417.46 255,417.46 H264.8 L267.6,420.66 H254.5 Z" fill="#d9a90f"/><path d="M254.5,420.36 H273.9 V433.66 Q273.9,434.16 273.4,434.16 H255 Q254.5,434.16 254.5,433.66 Z" fill="#fdca2a"/><path d="M256,420.36 H265.6 L266.6,421.36 H256 Z" fill="#fdca2a"/><path d="M267,422.46 L261.2,425.86 L267,429.26" fill="none" stroke="#d9a90f" stroke-width="2" stroke-linecap="round"/><circle cx="240" cy="466.25" r="6" fill="#fff" stroke="#d6d6d6" stroke-width="1"/><path d="M254.5,458.45 Q254.5,457.95 255,457.95 H264.8 L267.6,461.15 H254.5 Z" fill="#d9a90f"/><path d="M254.5,460.85 H273.9 V474.15 Q273.9,474.65 273.4,474.65 H255 Q254.5,474.65 254.5,474.15 Z" fill="#fdca2a"/><path d="M256,460.85 H265.6 L266.6,461.85 H256 Z" fill="#fdca2a"/><circle cx="240" cy="506.74" r="6" fill="#fff" stroke="#d6d6d6" stroke-width="1"/><path d="M254.5,498.94 Q254.5,498.44 255,498.44 H264.8 L267.6,501.64 H254.5 Z" fill="#d9a90f"/><path d="M254.5,501.34 H273.9 V514.64 Q273.9,515.14 273.4,515.14 H255 Q254.5,515.14 254.5,514.64 Z" fill="#fdca2a"/><path d="M256,501.34 H265.6 L266.6,502.34 H256 Z" fill="#fdca2a"/><circle cx="240" cy="547.23" r="6" fill="#fff" stroke="#d6d6d6" stroke-width="1"/><path d="M254.5,539.43 Q254.5,538.93 255,538.93 H264.8 L267.6,542.13 H254.5 Z" fill="#d9a90f"/><path d="M254.5,541.83 H273.9 V555.13 Q273.9,555.63 273.4,555.63 H255 Q254.5,555.63 254.5,555.13 Z" fill="#fdca2a"/><path d="M256,541.83 H265.6 L266.6,542.83 H256 Z" fill="#fdca2a"/><path d="M1554.8,124.30000000000001 L1563.8,133.3 M1563.8,124.30000000000001 L1554.8,133.3" stroke="#999" stroke-width="1.2" fill="none"/><path d="M1315.5,377.2 H1326.7 L1331.2,381.2 V393.7 H1315.5 Z" fill="#ececec" stroke="#d2d2d2" stroke-width="0.8"/><rect x="1321.0" y="380.7" width="6" height="5.5" fill="none" stroke="#a0a0a0" stroke-width="1"/><rect x="1313.7" y="387.8" width="14" height="6.3" rx="1.2" fill="#8c8c8c"/><rect x="1316.2" y="390.0" width="9" height="1.6" fill="#c4c4c4"/></svg>
</body></html>
